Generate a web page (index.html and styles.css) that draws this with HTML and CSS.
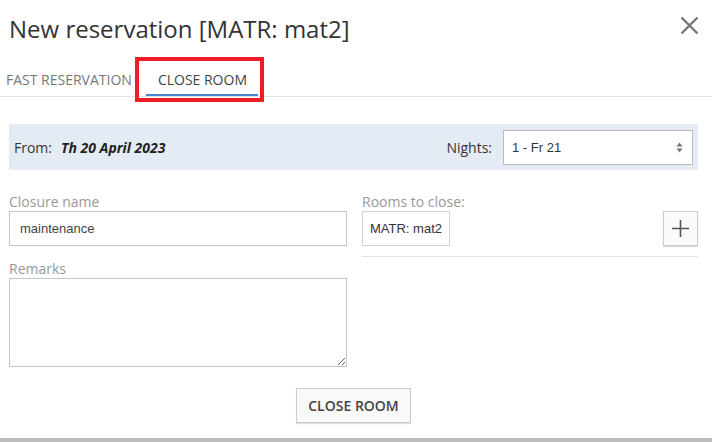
FILE: index.html
```html
<!DOCTYPE html>
<html>
  <head>
    <title>New reservation</title>
    <link rel="stylesheet" href="styles.css">
  </head>

  <body>
    <div class="modal">
      <div class="modal-header">
        <h2 class="modal-title">New reservation [MATR: mat2]</h2>
        <svg class="close-icon" width="19" height="19" viewBox="0 0 19 19">
          <path d="M1.5 1.5 L17.5 17.5 M17.5 1.5 L1.5 17.5" stroke="#777" stroke-width="2.4" fill="none"/>
        </svg>
      </div>

      <div class="tabs">
        <a class="tab">FAST RESERVATION</a>
        <a class="tab active">CLOSE ROOM</a>
      </div>

      <div class="modal-body">
        <div class="date-bar">
          <span class="from-label">From:</span>
          <span class="from-date">Th 20 April 2023</span>
          <span class="nights-label">Nights:</span>
          <div class="fake-select">
            <span>1 - Fr 21</span>
            <svg width="7" height="11" viewBox="0 0 7 11">
              <path d="M3.5 0.5 L6.5 4.5 L0.5 4.5 Z M3.5 10.5 L6.5 6.5 L0.5 6.5 Z" fill="#777"/>
            </svg>
          </div>
        </div>

        <div class="form-grid">
          <div class="col">
            <label class="field-label">Closure name</label>
            <input class="text-input" type="text" value="maintenance">
            <label class="field-label remarks-label">Remarks</label>
            <textarea class="text-area"></textarea>
          </div>
          <div class="col">
            <label class="field-label">Rooms to close:</label>
            <div class="rooms-row">
              <span class="room-chip">MATR: mat2</span>
              <button class="add-btn">
                <svg width="17" height="17" viewBox="0 0 17 17">
                  <path d="M8.5 0 V17 M0 8.5 H17" stroke="#555" stroke-width="1.6" fill="none"/>
                </svg>
              </button>
            </div>
            <hr class="rooms-line">
          </div>
        </div>

        <div class="footer">
          <button class="submit-btn">CLOSE ROOM</button>
        </div>
      </div>
      <div class="bottom-edge"></div>
    </div>
  </body>
</html>
```

FILE: styles.css
```css
body {
  margin: 0;
  font-family: "Open Sans", sans-serif;
  color: #333;
  background: #fff;
}

.modal {
  width: 712px;
  height: 442px;
  overflow: hidden;
}

.modal-header {
  display: flex;
  justify-content: space-between;
  align-items: flex-start;
  padding: 13px 13px 0 9px;
  height: 47px;
}

.modal-title {
  margin: 0;
  font-size: 24px;
  font-weight: 400;
  line-height: 32px;
  color: #333;
}

.close-icon {
  margin-top: 3px;
}

.tabs {
  display: flex;
  height: 36px;
  border-bottom: 1px solid #e3e3e3;
}

.tab {
  display: block;
  font-size: 14px;
  line-height: 19px;
  padding: 10px 14px 7px 6px;
  color: #777;
}

.tab.active {
  position: relative;
  padding: 10px 11px 5px 12px;
  color: #444;
  border-bottom: 2px solid #4a86d4;
}

/* red annotation box around the active tab */
.tab.active::after {
  content: "";
  position: absolute;
  left: -11px;
  right: -6px;
  top: -3px;
  bottom: -8px;
  border: 4px solid #ee1c25;
}

.modal-body {
  padding: 27px 14px 0 9px;
}

.date-bar {
  display: flex;
  align-items: center;
  height: 46px;
  padding: 0 5px;
  background: #e4ebf4;
  font-size: 14px;
}

.from-label {
  color: #333;
}

.from-date {
  margin-left: 9px;
  font-weight: 700;
  font-style: italic;
  color: #222;
}

.nights-label {
  margin-left: auto;
  margin-right: 11px;
}

.fake-select {
  display: flex;
  align-items: center;
  justify-content: space-between;
  box-sizing: border-box;
  width: 190px;
  height: 35px;
  padding: 0 9px 0 8px;
  background: #fff;
  border: 1px solid #bbb;
  font-family: "Liberation Sans", Arial, sans-serif;
  font-size: 13px;
  color: #333;
}

.form-grid {
  display: grid;
  grid-template-columns: 338px 336px;
  column-gap: 15px;
  margin-top: 22px;
}

.col {
  display: flex;
  flex-direction: column;
}

.field-label {
  font-size: 14px;
  line-height: 19px;
  color: #999;
}

.remarks-label {
  margin-top: 13px;
}

.text-input {
  box-sizing: border-box;
  height: 35px;
  margin: 0;
  padding: 0 10px;
  border: 1px solid #c4c4c4;
  font-family: "Liberation Sans", Arial, sans-serif;
  font-size: 13px;
  color: #444;
}

.text-area {
  box-sizing: border-box;
  height: 89px;
  margin: 0;
  border: 1px solid #c4c4c4;
  font-family: "Liberation Sans", Arial, sans-serif;
  font-size: 13px;
}

.rooms-row {
  display: flex;
  justify-content: space-between;
  align-items: flex-start;
}

.room-chip {
  box-sizing: border-box;
  height: 35px;
  padding: 0 7px;
  line-height: 33px;
  border: 1px solid #d2d2d2;
  font-family: "Liberation Sans", Arial, sans-serif;
  font-size: 13px;
  color: #333;
}

.add-btn {
  display: flex;
  align-items: center;
  justify-content: center;
  width: 35px;
  height: 35px;
  padding: 0;
  background: #fafafa;
  border: 1px solid #ccc;
  box-shadow: 0 1px 1px rgba(0, 0, 0, 0.15);
}

.rooms-line {
  margin: 10px 0 0;
  border: none;
  border-top: 1px solid #e2e2e2;
}

.footer {
  display: flex;
  justify-content: center;
  margin-top: 21px;
  height: 50px;
}

.submit-btn {
  box-sizing: border-box;
  width: 115px;
  height: 35px;
  background: #f9f9f9;
  border: 1px solid #ccc;
  box-shadow: 0 1px 1px rgba(0, 0, 0, 0.12);
  font-family: "Open Sans", sans-serif;
  font-size: 14px;
  font-weight: 600;
  color: #444;
}

.bottom-edge {
  height: 4px;
  background: #bdbdbd;
}
```
